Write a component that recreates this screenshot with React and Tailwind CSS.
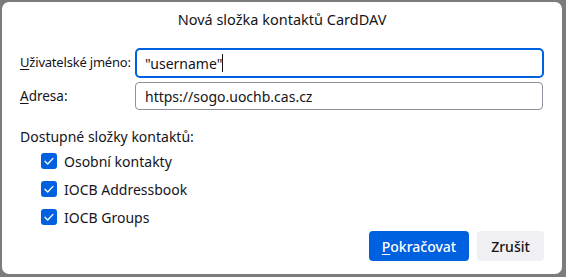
import React from 'react';

const Check = () => (
  <span className="w-4 h-4 rounded-[3px] bg-[#0061e0] flex items-center justify-center shrink-0">
    <svg width="12" height="12" viewBox="0 0 12 12" fill="none">
      <path d="M2 6.3l2.7 2.7L10 3.4" stroke="white" strokeWidth="1.3" strokeLinecap="round" strokeLinejoin="round" />
    </svg>
  </span>
);

const folders = ['Osobní kontakty', 'IOCB Addressbook', 'IOCB Groups'];

export default function App() {
  return (
    <div className="w-[566px] h-[277px] bg-[#7c7c7c] pl-[2px] pt-[2px] pr-[4px] pb-[3px] font-['Noto_Sans',sans-serif] text-[#15141a]">
      <div className="w-full h-full bg-white rounded-[7px] flex flex-col px-[18px]">
        <h1 className="text-center text-[14.5px] leading-5 pt-[7px]">Nová složka kontaktů CardDAV</h1>

        <div className="grid grid-cols-[115px_1fr] items-center gap-y-[4px] mt-[19px] text-[14px]">
          <label className="whitespace-nowrap text-[13px] tracking-[-0.2px]"><span className="underline underline-offset-2">U</span>živatelské jméno:</label>
          <div className="h-[30px] border-2 border-[#0061e0] rounded-[5px] flex items-center pl-[8px]">
            "username"<span className="w-px h-[18px] bg-[#15141a]" />
          </div>
          <label className="whitespace-nowrap text-[13.5px]"><span className="underline underline-offset-2">A</span>dresa:</label>
          <div className="h-[28px] border border-[#8f8f9d] rounded-[4px] flex items-center pl-[9px] mr-px">
            https://sogo.uochb.cas.cz
          </div>
        </div>

        <p className="text-[14px] leading-5 mt-[17px]">Dostupné složky kontaktů:</p>
        <ul className="flex flex-col gap-[12px] mt-[6px] pl-[21px] text-[14px]">
          {folders.map((f) => (
            <li key={f} className="flex items-center gap-[7px] h-4">
              <Check />
              <span>{f}</span>
            </li>
          ))}
        </ul>

        <div className="flex justify-end gap-[8px] mt-auto mb-[13px]">
          <button className="w-[100px] h-[30px] rounded-[4px] bg-[#0061e0] text-white text-[14px] font-medium">
            <span className="underline underline-offset-2">P</span>okračovat
          </button>
          <button className="w-[67px] h-[30px] rounded-[4px] bg-[#f0f0f4] text-[14px] font-medium">
            Zrušit
          </button>
        </div>
      </div>
    </div>
  );
}
